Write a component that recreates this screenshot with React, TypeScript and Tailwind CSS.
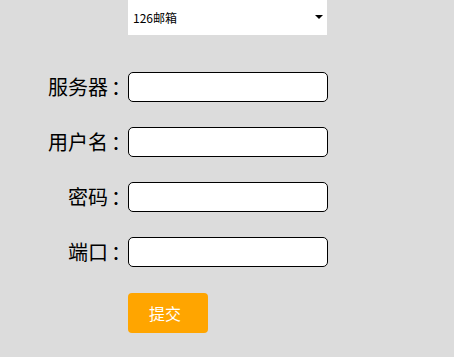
import { useState } from 'react'

const fields = [
  { label: '服务器', type: 'text' },
  { label: '用户名', type: 'text' },
  { label: '密码', type: 'password' },
  { label: '端口', type: 'text' },
]

export default function App() {
  const [mail, setMail] = useState('126')

  return (
    <div
      className="min-h-[357px] w-full bg-[#dcdcdc] text-black"
      style={{ fontFamily: '"Noto Sans CJK SC", "Noto Sans", sans-serif' }}
    >
      <div className="flex flex-col">
        <div className="ml-[128px] relative w-[199px] h-[35px] bg-white">
          <select
            value={mail}
            onChange={(e) => setMail(e.target.value)}
            className="appearance-none w-full h-full bg-transparent pl-[5px] text-[12px] outline-none"
          >
            <option value="126">126邮箱</option>
            <option value="163">163邮箱</option>
            <option value="qq">QQ邮箱</option>
          </select>
          <span className="pointer-events-none absolute right-[4px] top-[15px] w-0 h-0 border-l-[4px] border-r-[4px] border-t-[4px] border-l-transparent border-r-transparent border-t-black" />
        </div>

        {fields.map((f, i) => (
          <div key={f.label} className={`flex items-center h-[30px] ${i === 0 ? 'mt-[37px]' : 'mt-[25px]'}`}>
            <label className="w-[128px] text-right text-[20px] leading-none whitespace-nowrap">
              {f.label}
              <span className="inline-block w-[20px] pl-[3px] text-left whitespace-nowrap">：</span>
            </label>
            <input
              type={f.type}
              className="w-[200px] h-[30px] bg-white border border-black rounded-[5px] px-1 text-[14px] outline-none"
            />
          </div>
        ))}

        <div className="ml-[128px] mt-[26px]">
          <button className="w-[80px] h-[40px] bg-[#ffa500] rounded-[4px] pr-[6px] text-white text-[16px]">
            提交
          </button>
        </div>
      </div>
    </div>
  )
}
